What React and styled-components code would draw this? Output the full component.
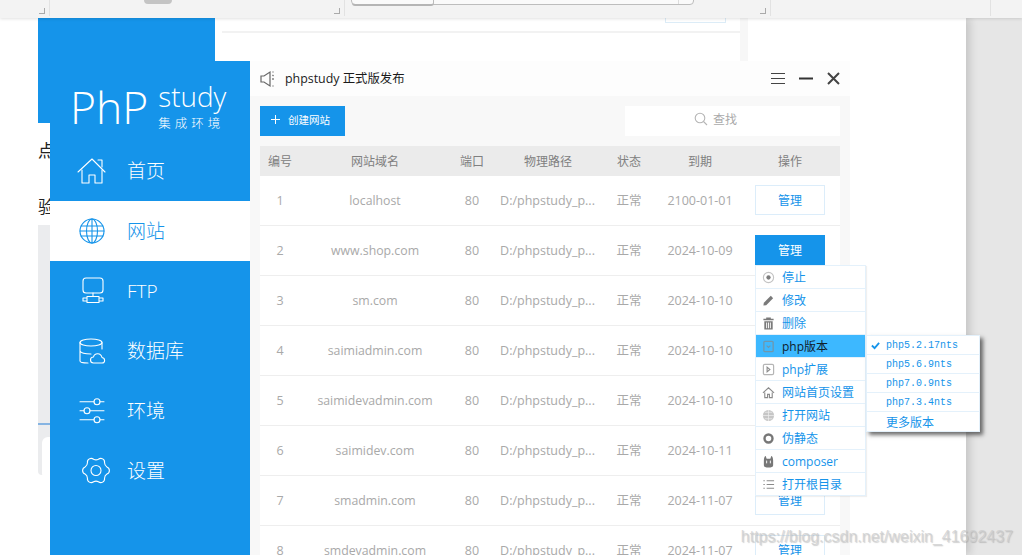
import React from 'react';
import styled, { createGlobalStyle } from 'styled-components';

const BLUE = '#1594ea';
const CJK = '"Open Sans", "Noto Sans CJK SC", sans-serif';

const GlobalStyle = createGlobalStyle`
  html, body { margin: 0; padding: 0; background: #e6e6e6; overflow: hidden; }
  * { box-sizing: border-box; }
`;

const Page = styled.div`
  position: relative;
  width: 1022px;
  height: 555px;
  overflow: hidden;
  background: #e6e6e6;
  font-family: ${CJK};
`;

/* the editor chrome along the top of the screen */
const TopBar = styled.div`
  position: relative;
  z-index: 3;
  height: 18px;
  background: #f3f3f3;
  box-shadow: 0 1px 3px rgba(0, 0, 0, 0.12);
  display: flex;
`;

const BarCell = styled.div`
  position: relative;
  width: ${(p) => p.$w}px;
  height: 16px;
  border-right: 1px solid #e2e2e2;
  flex: none;
  &::after {
    content: '';
    display: ${(p) => (p.$mark ? 'block' : 'none')};
    position: absolute;
    right: 4px;
    bottom: 2px;
    width: 5px;
    height: 5px;
    border-right: 1px solid #aaa;
    border-bottom: 1px solid #aaa;
  }
`;

const Pill = styled.div`
  position: absolute;
  left: 94px;
  top: 0;
  width: 28px;
  height: 4px;
  border-radius: 0 0 5px 5px;
  background: #c4c4c4;
`;

const FindBox = styled.div`
  position: absolute;
  left: 6px;
  top: -6px;
  width: 343px;
  height: 11px;
  border: 1px solid #bdbdbd;
  border-radius: 4px;
  background: #fafafa;
  &::before {
    content: '';
    position: absolute;
    left: 0;
    top: 0;
    width: 81px;
    height: 9px;
    border-bottom: 2px solid #b5b5b5;
    border-right: 1px solid #bbb;
    border-radius: 3px;
  }
  &::after {
    content: '';
    position: absolute;
    right: 14px;
    top: 0;
    height: 9px;
    border-left: 1px solid #ddd;
  }
`;

const Doc = styled.div`
  position: absolute;
  left: 0;
  top: 18px;
  width: 966px;
  bottom: 0;
  background: #fff;
  box-shadow: 4px 0 8px rgba(0, 0, 0, 0.14);
  overflow: hidden;
`;

const BlueBlock = styled.div`
  position: absolute;
  left: 38px;
  top: 0;
  width: 177px;
  height: 105px;
  background: ${BLUE};
`;

const BackPanel = styled.div`
  position: absolute;
  left: 222px;
  top: 0;
  width: 526px;
  height: 43px;
  border-right: 8px solid #f7f7f7;
`;

const BackRow = styled.div`
  height: 15px;
  border-bottom: 2px solid #f2f2f2;
  display: flex;
  justify-content: flex-end;
  padding-right: 14px;
`;

const BackButton = styled.div`
  width: 61px;
  height: 5px;
  border: 1px solid #dcecf7;
  border-top: 0;
`;

const StrayChar = styled.div`
  position: absolute;
  left: 38px;
  top: ${(p) => p.$top}px;
  font: 17px/20px "Noto Sans CJK SC", serif;
  color: #222;
`;

const BackImage = styled.div`
  position: absolute;
  left: 38px;
  top: 207px;
  width: 14px;
  height: 250px;
  background: #ebecee;
  border-bottom-left-radius: 4px;
  overflow: hidden;
  &::before {
    content: '';
    position: absolute;
    left: 0;
    right: 0;
    top: 198px;
    height: 3px;
    border-top: 2px solid #86b4e2;
  }
  &::after {
    content: '';
    position: absolute;
    left: 4px;
    top: 212px;
    width: 20px;
    height: 42px;
    border-radius: 6px;
    background: #fff;
  }
`;

const Window = styled.div`
  position: absolute;
  left: 50px;
  top: 61px;
  width: 800px;
  height: 494px;
  display: flex;
  z-index: 1;
`;

const Sidebar = styled.div`
  width: 200px;
  flex: none;
  background: ${BLUE};
  color: #fff;
`;

const Logo = styled.div`
  height: 80px;
  padding: 21px 0 0 20px;
  display: flex;
  gap: 10px;
`;

const LogoMark = styled.div`
  font: 300 44.5px/50px "Open Sans", sans-serif;
`;

const LogoSide = styled.div`
  display: flex;
  flex-direction: column;
`;

const LogoStudy = styled.div`
  font: 300 27.8px/34px "Open Sans", sans-serif;
  margin-top: -3px;
`;

const LogoSub = styled.div`
  font: 300 12.5px/16px "Noto Sans CJK SC", sans-serif;
  letter-spacing: 4px;
  margin-top: 2px;
  white-space: nowrap;
`;

const NavItem = styled.div`
  height: 60px;
  display: flex;
  align-items: center;
  padding-left: 27px;
  gap: 20px;
  background: ${(p) => (p.$active ? '#fff' : 'transparent')};
  color: ${(p) => (p.$active ? BLUE : '#fff')};
  font: 300 19px/24px ${CJK};
  svg { width: 30px; height: 30px; flex: none; overflow: visible; }
`;

const Main = styled.div`
  flex: 1;
  background: #f8f8f8;
  display: flex;
  flex-direction: column;
`;

const TitleBar = styled.div`
  height: 35px;
  flex: none;
  background: #fdfdfd;
  display: flex;
  align-items: center;
  padding: 0 9px 0 10px;
`;

const TitleText = styled.div`
  margin: 1px 0 0 9px;
  font: 12.4px/18px ${CJK};
  color: #1b1b1b;
  flex: 1;
`;

const WinControls = styled.div`
  display: flex;
  align-items: center;
  gap: 13px;
  svg { width: 15px; height: 15px; display: block; }
`;

const Content = styled.div`
  padding: 10px 10px 0;
`;

const Toolbar = styled.div`
  display: flex;
  justify-content: space-between;
  height: 30px;
  margin-bottom: 10px;
`;

const CreateButton = styled.div`
  width: 85px;
  background: ${BLUE};
  color: #fff;
  display: flex;
  align-items: center;
  padding: 0 0 3px 10px;
  gap: 7px;
  font: 10.5px/14px "Noto Sans CJK SC", sans-serif;
  svg { width: 11px; height: 11px; }
`;

const SearchBox = styled.div`
  width: 215px;
  background: #fff;
  display: flex;
  align-items: center;
  justify-content: center;
  gap: 5px;
  color: #aaa;
  font: 12px/16px "Noto Sans CJK SC", sans-serif;
  padding: 0 34px 5px 0;
  svg { width: 14px; height: 14px; }
`;

const COLUMNS = '40px 150px 44px 108px 54px 88px 92px 4px';

const HeadRow = styled.div`
  display: grid;
  grid-template-columns: ${COLUMNS};
  height: 30px;
  padding-top: 1px;
  align-items: center;
  background: #ebebeb;
  color: #808080;
  font: 12px/16px ${CJK};
  text-align: center;
`;

const Row = styled.div`
  position: relative;
  display: grid;
  grid-template-columns: ${COLUMNS};
  height: 50px;
  align-items: center;
  background: #fff;
  border-bottom: 1px solid #eeeeee;
  color: #a9a9a9;
  font: 12.5px/16px ${CJK};
  text-align: center;
  z-index: ${(p) => (p.$raised ? 2 : 0)};
`;

const DomainCell = styled.div`
  font-size: 12.3px;
`;

const PathCell = styled.div`
  white-space: nowrap;
  margin-left: -1px;
`;

const ActionCell = styled.div`
  position: relative;
  width: 70px;
  margin: -1px 0 0 11px;
`;

const ManageButton = styled.div`
  height: 30px;
  display: flex;
  align-items: center;
  justify-content: center;
  border: 1px solid ${(p) => (p.$active ? BLUE : '#dcedfa')};
  background: ${(p) => (p.$active ? BLUE : '#fff')};
  color: ${(p) => (p.$active ? '#fff' : BLUE)};
  font: 12px/16px "Noto Sans CJK SC", sans-serif;
`;

const Menu = styled.div`
  position: absolute;
  left: 0;
  top: 30px;
  width: 111px;
  background: #fff;
  border: 1px solid #e4f1fb;
  text-align: left;
  z-index: 3;
  box-shadow: 1px 1px 1px rgba(0, 0, 0, 0.06);
`;

const MenuItem = styled.div`
  position: relative;
  height: 23px;
  display: flex;
  align-items: center;
  padding: 1px 0 0 6px;
  gap: 7px;
  border-bottom: 1px solid #e4f1fb;
  background: ${(p) => (p.$active ? '#3db8ff' : 'transparent')};
  color: ${(p) => (p.$active ? '#10202c' : BLUE)};
  font: 12px/16px ${CJK};
  white-space: nowrap;
  svg { width: 13px; height: 13px; flex: none; }
  &:last-child { border-bottom: 0; height: 22px; }
`;

const SubMenu = styled.div`
  position: absolute;
  left: 110px;
  top: 0;
  width: 114px;
  background: #fff;
  border: 1px solid #e4f1fb;
  box-shadow: 3px 3px 4px rgba(60, 60, 60, 0.75);
`;

const SubItem = styled.div`
  position: relative;
  height: 19px;
  display: flex;
  align-items: center;
  padding: 1px 0 0 19px;
  border-bottom: 1px solid #e4f1fb;
  color: ${BLUE};
  font: ${(p) => (p.$cjk ? '12px/16px "Noto Sans CJK SC", sans-serif' : '10px/14px "Liberation Mono", monospace')};
  &:last-child { border-bottom: 0; }
  svg { position: absolute; left: 4px; top: 5px; width: 9px; height: 9px; }
`;

const Watermark = styled.div`
  position: absolute;
  z-index: 4;
  right: 9px;
  bottom: 8px;
  font: 16px/20px "Liberation Sans", sans-serif;
  color: rgba(205, 205, 205, 0.75);
  text-shadow: 1px 1px 1px rgba(120, 120, 120, 0.35);
  white-space: nowrap;
`;

const Line = (props) => (
  <svg viewBox="0 0 30 30" fill="none" stroke="currentColor" strokeWidth="1.1" strokeLinejoin="round" strokeLinecap="round" {...props} />
);

const HomeIcon = () => (
  <Line>
    <path d="M1 16 15 3l13 13" />
    <path d="M21 4h4v7" />
    <path d="M5 14v13h7v-8h6v8h7V14" />
  </Line>
);

const GlobeIcon = () => (
  <Line>
    <circle cx="15" cy="15" r="12" />
    <ellipse cx="15" cy="15" rx="5.5" ry="12" />
    <path d="M15 3v24M4 10h22M3 15h24M4 20h22" />
  </Line>
);

const FtpIcon = () => (
  <Line>
    <rect x="6" y="2" width="20" height="15" rx="3" />
    <path d="M16 17v3.500" />
    <path d="M10 20.500h12v6H10zM10 22H6v3h4M22 22h4v3h-4" />
  </Line>
);

const DbIcon = () => (
  <Line>
    <ellipse cx="14" cy="6.500" rx="11" ry="3.500" />
    <path d="M3 6.500V25c0 1 3 2 8 2M25 6.500V13M3 15c1 2 6 3 11 3" />
    <path d="M16.500 27H25c3.500 0 3.500-5 0-5.500-1-5-7.500-5-8.500-.5-4 0-4 6 0 6z" />
  </Line>
);

const SlidersIcon = () => (
  <Line>
    <path d="M3 5.700h14M23 5.700h4M3 14.700h4M13 14.700h14M3 23.700h14M23 23.700h4" />
    <circle cx="20" cy="5.700" r="3" />
    <circle cx="10" cy="14.700" r="3" />
    <circle cx="20" cy="23.700" r="3" />
  </Line>
);

// six lobed flower outline, lobes pointing left and right
const gearPath = () => {
  const cx = 19;
  const cy = 14.5;
  const pt = (deg, r) => {
    const a = (deg * Math.PI) / 180;
    return `${(cx + r * Math.cos(a)).toFixed(2)} ${(cy + r * Math.sin(a)).toFixed(2)}`;
  };
  let d = `M${pt(-18, 11.5)}`;
  for (let k = 0; k < 6; k++) {
    const a = k * 60;
    d += `A3.800 3.800 0 0 1 ${pt(a + 18, 11.5)}`;
    d += `A5 5 0 0 0 ${pt(a + 42, 11.5)}`;
  }
  return `${d}Z`;
};

const GearIcon = () => (
  <Line>
    <path d={gearPath()} />
    <circle cx="19" cy="14.500" r="5" />
  </Line>
);

const Speaker = () => (
  <svg viewBox="0 0 16 18" width="16" height="18" fill="none" stroke="#666" strokeWidth="1.2">
    <path d="M1 6h3l6-4v14l-6-4H1z" />
    <path d="M13 1.500v1M13 8v2M13 15.500v1M12.500 5c1 1 1 1 1 1" />
  </svg>
);

const Glyph = ({ children, fill }) => (
  <svg viewBox="0 0 14 14" fill={fill || 'none'} stroke={fill ? 'none' : '#8a8a8a'} strokeWidth="1.2">
    {children}
  </svg>
);

const menuIcons = {
  stop: <Glyph><circle cx="7" cy="7" r="5.500" stroke="#c4c4c4" /><circle cx="7" cy="7" r="2.300" fill="#7c7c7c" stroke="none" /></Glyph>,
  edit: <Glyph fill="#7a7a7a"><path d="M2 9.500 9.500 2l2.500 2.500L4.500 12 1.500 12.500z" /></Glyph>,
  trash: <Glyph fill="#7a7a7a"><path d="M1.500 2h11v1.500h-11zM4.500.5h5V2h-5zM2.500 4.500h9v9h-9zM4.500 6v6h1V6zM8.500 6v6h1V6zM6.500 6v6h1V6z" fillRule="evenodd" /></Glyph>,
  version: <Glyph><rect x="2" y="1.500" width="10" height="11" rx="1" stroke="#6f97ad" strokeWidth="1.4" /><path d="M5 6l2 2 2-2" stroke="#6f97ad" /></Glyph>,
  ext: <Glyph><rect x="1.500" y="1.500" width="11" height="11" rx="1.500" stroke="#b5b5b5" strokeWidth="1.3" /><path d="M5.500 4.500v5l3-2.500z" stroke="#8a8a8a" /></Glyph>,
  home: <Glyph><path d="M1 7.500 7 2l6 5.500M3 7v5.500h3V9h2v3.500h3V7" /></Glyph>,
  globe: <Glyph fill="#c6c6c6"><circle cx="7" cy="7" r="6" /><path d="M1 7h12M7 1v12M3 3.500h8M3 10.500h8" stroke="#eee" strokeWidth="0.8" /></Glyph>,
  rewrite: <Glyph><circle cx="7" cy="7" r="4.300" stroke="#777" strokeWidth="2.600" /></Glyph>,
  composer: <Glyph fill="#777"><path d="M2 6c0-3 1-5 2-5l1 3h4l1-3c1 0 2 2 2 5v5c0 2-2 2.500-5 2.500S2 13 2 11z" /><path d="M5 6v3M9 6v3" stroke="#fff" strokeWidth="1" /></Glyph>,
  list: <Glyph><path d="M5 3h8M5 7h8M5 11h8M1.500 3h1.500M1.500 7h1.500M1.500 11h1.500" stroke="#8a8a8a" /></Glyph>,
};

const navItems = [
  { label: '首页', icon: <HomeIcon /> },
  { label: '网站', icon: <GlobeIcon />, active: true },
  { label: 'FTP', icon: <FtpIcon /> },
  { label: '数据库', icon: <DbIcon /> },
  { label: '环境', icon: <SlidersIcon /> },
  { label: '设置', icon: <GearIcon /> },
];

const sites = [
  ['1', 'localhost', '2100-01-01'],
  ['2', 'www.shop.com', '2024-10-09'],
  ['3', 'sm.com', '2024-10-10'],
  ['4', 'saimiadmin.com', '2024-10-10'],
  ['5', 'saimidevadmin.com', '2024-10-10'],
  ['6', 'saimidev.com', '2024-10-11'],
  ['7', 'smadmin.com', '2024-11-07'],
  ['8', 'smdevadmin.com', '2024-11-07'],
];

const menuItems = [
  ['stop', '停止'],
  ['edit', '修改'],
  ['trash', '删除'],
  ['version', 'php版本'],
  ['ext', 'php扩展'],
  ['home', '网站首页设置'],
  ['globe', '打开网站'],
  ['rewrite', '伪静态'],
  ['composer', 'composer'],
  ['list', '打开根目录'],
];

const versions = ['php5.2.17nts', 'php5.6.9nts', 'php7.0.9nts', 'php7.3.4nts'];

const VersionMenu = () => (
  <SubMenu>
    {versions.map((v, i) => (
      <SubItem key={v}>
        {i === 0 && (
          <svg viewBox="0 0 10 10" fill="none" stroke={BLUE} strokeWidth="2">
            <path d="M1 5l3 3 5-6" />
          </svg>
        )}
        {v}
      </SubItem>
    ))}
    <SubItem $cjk>更多版本</SubItem>
  </SubMenu>
);

const RowMenu = () => (
  <Menu>
    {menuItems.map(([icon, label]) => (
      <MenuItem key={label} $active={label === 'php版本'}>
        {menuIcons[icon]}
        {label}
        {label === 'php版本' && <VersionMenu />}
      </MenuItem>
    ))}
  </Menu>
);

export default function App() {
  return (
    <Page>
      <GlobalStyle />
      <TopBar>
        <BarCell $w={50} $mark />
        <BarCell $w={295} $mark>
          <Pill />
        </BarCell>
        <BarCell $w={426} $mark>
          <FindBox />
        </BarCell>
        <BarCell $w={220} />
      </TopBar>
      <Doc>
        <BlueBlock />
        <BackPanel>
          <BackRow>
            <BackButton />
          </BackRow>
        </BackPanel>
        <StrayChar $top={122}>点</StrayChar>
        <StrayChar $top={178}>验</StrayChar>
        <BackImage />
      </Doc>
      <Window>
        <Sidebar>
          <Logo>
            <LogoMark>PhP</LogoMark>
            <LogoSide>
              <LogoStudy>study</LogoStudy>
              <LogoSub>集成环境</LogoSub>
            </LogoSide>
          </Logo>
          {navItems.map((item) => (
            <NavItem key={item.label} $active={item.active}>
              {item.icon}
              <span>{item.label}</span>
            </NavItem>
          ))}
        </Sidebar>
        <Main>
          <TitleBar>
            <Speaker />
            <TitleText>phpstudy 正式版发布</TitleText>
            <WinControls>
              <svg viewBox="0 0 15 15" fill="none" stroke="#444" strokeWidth="1">
                <path d="M1 2.500h14M1 7.500h14M1 12.500h14" />
              </svg>
              <svg viewBox="0 0 15 15" fill="none" stroke="#333" strokeWidth="2">
                <path d="M1 7.500h14" />
              </svg>
              <svg viewBox="0 0 15 15" fill="none" stroke="#444" strokeWidth="2">
                <path d="M2 2l11 11M13 2 2 13" />
              </svg>
            </WinControls>
          </TitleBar>
          <Content>
            <Toolbar>
              <CreateButton>
                <svg viewBox="0 0 11 11" fill="none" stroke="#fff" strokeWidth="1">
                  <path d="M5.500 1v9M1 5.500h9" />
                </svg>
                创建网站
              </CreateButton>
              <SearchBox>
                <svg viewBox="0 0 14 14" fill="none" stroke="#b5b5b5" strokeWidth="1.100">
                  <circle cx="6" cy="6" r="4.800" />
                  <path d="M9.500 9.500 13 13" />
                </svg>
                查找
              </SearchBox>
            </Toolbar>
            <HeadRow>
              <div>编号</div>
              <div>网站域名</div>
              <div>端口</div>
              <div>物理路径</div>
              <div>状态</div>
              <div>到期</div>
              <div>操作</div>
            </HeadRow>
            {sites.map(([id, domain, expire]) => (
              <Row key={id} $raised={id === '2'}>
                <div>{id}</div>
                <DomainCell>{domain}</DomainCell>
                <div>80</div>
                <PathCell>D:/phpstudy_p...</PathCell>
                <div>正常</div>
                <div>{expire}</div>
                <ActionCell>
                  <ManageButton $active={id === '2'}>管理</ManageButton>
                  {id === '2' && <RowMenu />}
                </ActionCell>
              </Row>
            ))}
          </Content>
        </Main>
      </Window>
      <Watermark>https://blog.csdn.net/weixin_41692437</Watermark>
    </Page>
  );
}
